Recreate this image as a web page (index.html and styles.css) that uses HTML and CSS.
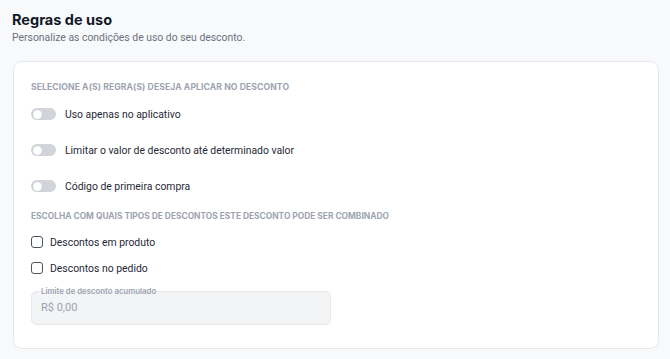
FILE: index.html
```html
<!DOCTYPE html>
<html lang="pt-BR">
<head>
    <meta charset="UTF-8">
    <meta name="viewport" content="width=device-width, initial-scale=1.0">
    <title>Regras de uso</title>
    <link rel="stylesheet" href="styles.css">
</head>
<body>
    <div class="page">
        <div class="header">
            <h2>Regras de uso</h2>
            <p>Personalize as condições de uso do seu desconto.</p>
        </div>

        <div class="card">
            <div class="section-title">Selecione a(s) regra(s) deseja aplicar no desconto</div>

            <label class="toggle-row">
                <span class="toggle"><span class="knob"></span></span>
                <span>Uso apenas no aplicativo</span>
            </label>
            <label class="toggle-row">
                <span class="toggle"><span class="knob"></span></span>
                <span>Limitar o valor de desconto até determinado valor</span>
            </label>
            <label class="toggle-row">
                <span class="toggle"><span class="knob"></span></span>
                <span>Código de primeira compra</span>
            </label>

            <div class="section-title second">Escolha com quais tipos de descontos este desconto pode ser combinado</div>

            <label class="check-row">
                <span class="checkbox"></span>
                <span>Descontos em produto</span>
            </label>
            <label class="check-row">
                <span class="checkbox"></span>
                <span>Descontos no pedido</span>
            </label>

            <fieldset class="field">
                <legend>Limite de desconto acumulado</legend>
                <span class="field-value">R$ 0,00</span>
            </fieldset>
        </div>
    </div>
</body>
</html>
```

FILE: styles.css
```css
body {
    margin: 0;
    background-color: #f8f9fb;
    font-family: "Roboto", "Noto Sans", sans-serif;
    color: #1f2937;
}
.page {
    padding: 10px 10px 0 13px;
}
.header h2 {
    margin: 0;
    font-family: "Inter", sans-serif;
    font-size: 14.5px;
    font-weight: 700;
    color: #111827;
    line-height: 20px;
    margin-left: -1px;
}
.header p {
    margin: 1px 0 0 -1px;
    font-size: 10.4px;
    color: #6b7280;
    line-height: 14px;
}
.card {
    margin-top: 16px;
    width: 646px;
    height: 288px;
    box-sizing: border-box;
    background-color: #fff;
    border: 1px solid #e5e7eb;
    border-radius: 9px;
    padding: 18px 17px 0 17px;
}
.section-title {
    font-family: "Inter", sans-serif;
    font-size: 8.6px;
    font-weight: 700;
    text-transform: uppercase;
    color: #9ca3af;
    line-height: 14px;
    letter-spacing: 0.1px;
}
.section-title.second {
    font-size: 8.4px;
    letter-spacing: 0;
    margin-top: 5px;
    margin-bottom: 6px;
}
.toggle-row {
    display: flex;
    align-items: center;
    gap: 9px;
    font-size: 10.4px;
    color: #1f2937;
    height: 36px;
}
.toggle-row:first-of-type {
    margin-top: 2px;
}
.toggle {
    width: 25px;
    height: 12px;
    border-radius: 6px;
    background-color: #d1d5db;
    display: flex;
    align-items: center;
    padding-left: 1.5px;
    box-sizing: border-box;
}
.knob {
    width: 9px;
    height: 9px;
    border-radius: 50%;
    background-color: #fff;
    box-shadow: 0 0 1px rgba(0,0,0,0.2);
}
.check-row {
    display: flex;
    align-items: center;
    gap: 7px;
    font-size: 10.4px;
    color: #1f2937;
    height: 26px;
}
.checkbox {
    width: 10px;
    height: 10px;
    border: 1.4px solid #4b5563;
    border-radius: 3px;
}
.field {
    margin: 6px 0 0 0;
    width: 300px;
    height: 38px;
    box-sizing: border-box;
    border: 1px solid #e5e7eb;
    border-radius: 6px;
    background-color: #f3f4f6;
    padding: 0 9px;
}
.field legend {
    font-family: "Inter", sans-serif;
    font-size: 7.8px;
    font-weight: 600;
    color: #9ca3af;
    padding: 0 2px;
    margin-left: -2px;
    line-height: 8px;
}
.field-value {
    display: block;
    font-size: 11px;
    color: #9ca3af;
    margin-top: 6px;
}
```
